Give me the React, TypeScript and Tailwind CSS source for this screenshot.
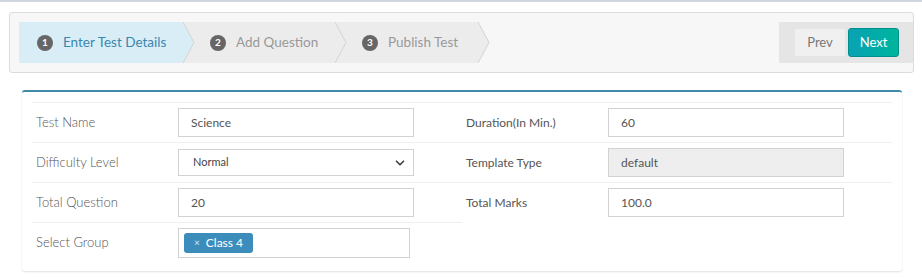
import { ChevronDown } from "lucide-react";

const steps = [
  { n: 1, label: "Enter Test Details", w: "w-[164px]", pl: "pl-[18px]", active: true },
  { n: 2, label: "Add Question", w: "w-[152px]", pl: "pl-[27px]", active: false },
  { n: 3, label: "Publish Test", w: "w-[143px]", pl: "pl-[27px]", active: false },
];

function Arrow({ fill }: { fill: string }) {
  return (
    <svg
      className="absolute left-full top-0 z-10"
      width="12"
      height="41"
      viewBox="0 0 12 41"
    >
      <polygon points="0,0 11,20.5 0,41" fill={fill} />
      <polyline points="0,0 11,20.5 0,41" fill="none" stroke="#d3d3d3" strokeWidth="1" />
    </svg>
  );
}

function Wizard() {
  return (
    <div className="mx-[9px] mr-[8px] flex items-center justify-between rounded-[3px] border border-[#dcdcdc] bg-[#f7f7f7] py-[9px] pl-[9px]">
      <div className="flex h-[41px]">
        {steps.map((s) => (
          <div
            key={s.n}
            className={`relative flex items-center gap-[10px] ${s.w} ${s.pl} ${
              s.active ? "bg-[#d9edf7] text-[#3a87ad]" : "bg-[#ececec] text-[#999]"
            }`}
          >
            <span className="flex h-[16px] w-[16px] items-center justify-center rounded-full bg-[#666] text-[10px] font-bold text-white">
              {s.n}
            </span>
            <span className="text-[13.5px] whitespace-nowrap">{s.label}</span>
            <Arrow fill={s.active ? "#d9edf7" : "#ececec"} />
          </div>
        ))}
      </div>
      <div className="flex h-[41px] w-[134px] items-center bg-[#e5e5e5] pl-[16px]">
        <button className="h-[27px] w-[50px] rounded-[2px] bg-[#f0f0f0] text-[13px] text-[#777]">
          Prev
        </button>
        <button className="ml-[3px] h-[29px] w-[51px] rounded-[3px] border border-[#008f8f] bg-gradient-to-r from-[#0aa2b4] to-[#00b59b] text-[13px] text-white">
          Next
        </button>
      </div>
    </div>
  );
}

function Row({ label, small, children }: { label: string; small?: boolean; children: React.ReactNode }) {
  return (
    <div className="flex h-[40px] items-center border-t border-[#efefef]">
      <div
        className={`w-[146px] pl-[4px] ${
          small ? "text-[12px] text-[#555]" : "text-[13px] font-light text-[#555]"
        }`}
      >
        {label}
      </div>
      {children}
    </div>
  );
}

function TextBox({ value, disabled }: { value: string; disabled?: boolean }) {
  return (
    <div
      className={`flex h-[29px] w-[236px] items-center border border-[#d2d2d2] pl-[12px] text-[12px] text-[#555] ${
        disabled ? "bg-[#eeeeee]" : "bg-white"
      }`}
    >
      {value}
    </div>
  );
}

export default function App() {
  return (
    <div
      className="min-h-[279px] border-t-2 border-[#d2d6de] bg-white pt-[10px]"
      style={{ fontFamily: "Lato, 'Open Sans', sans-serif" }}
    >
      <Wizard />
      <div className="ml-[22px] mr-[20px] mt-[17px] rounded-[3px] border-t-2 border-[#3f89ab] bg-white px-[10px] pt-[10px] pb-[9px] shadow-[0_1px_2px_rgba(0,0,0,0.12)]">
        <div className="grid grid-cols-2">
          <div>
            <Row label="Test Name">
              <TextBox value="Science" />
            </Row>
            <Row label="Difficulty Level">
              <div className="flex h-[27px] w-[236px] items-center justify-between border border-[#d2d2d2] bg-white pl-[14px] pr-[6px] text-[11px] text-[#444]">
                <span>Normal</span>
                <ChevronDown size={14} strokeWidth={3} className="text-[#444]" />
              </div>
            </Row>
            <Row label="Total Question">
              <TextBox value="20" />
            </Row>
            <Row label="Select Group">
              <div className="flex h-[30px] w-[232px] items-center border border-[#d2d2d2] bg-white pl-[5px]">
                <span className="flex h-[20px] items-center gap-[6px] rounded-[3px] bg-[#3c8dbc] px-[10px] text-[12px] text-white">
                  <span className="text-[10px] text-[#d6e6f0]">×</span>
                  Class 4
                </span>
              </div>
            </Row>
          </div>
          <div>
            <Row label="Duration(In Min.)" small>
              <TextBox value="60" />
            </Row>
            <Row label="Template Type" small>
              <TextBox value="default" disabled />
            </Row>
            <Row label="Total Marks" small>
              <TextBox value="100.0" />
            </Row>
          </div>
        </div>
      </div>
    </div>
  );
}
